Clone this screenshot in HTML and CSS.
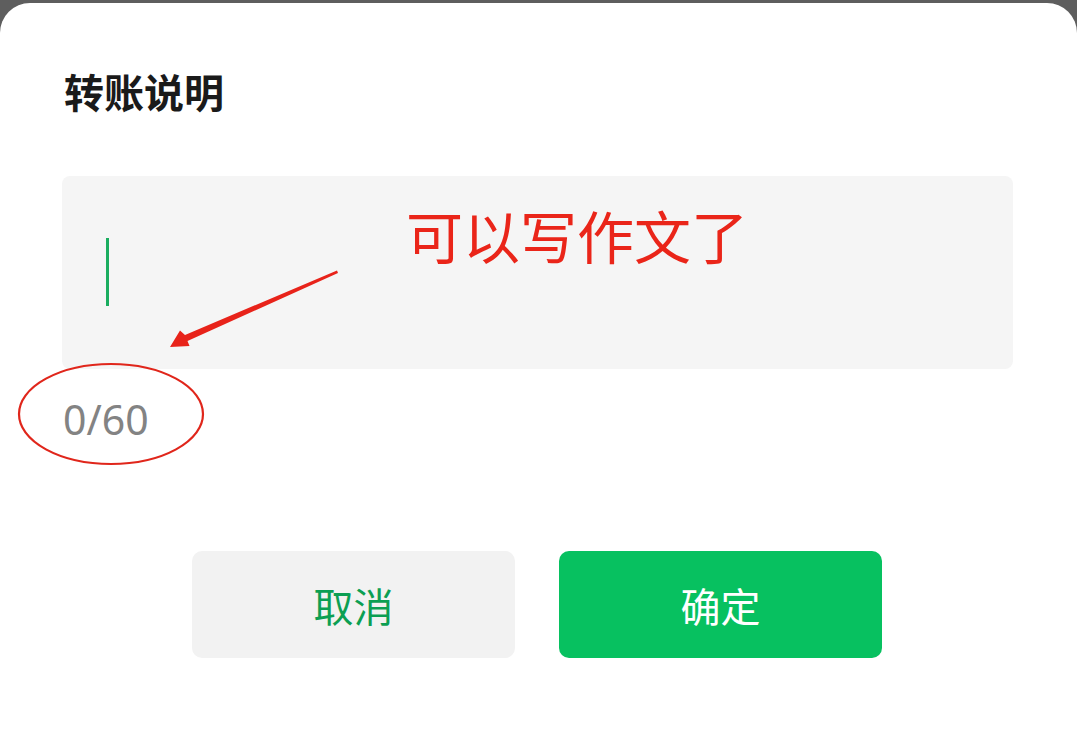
FILE: index.html
```html
<!DOCTYPE html>
<html lang="zh-CN">
<head>
  <meta charset="UTF-8">
  <meta name="viewport" content="width=device-width, initial-scale=1.0">
  <title>转账说明</title>
  <link rel="stylesheet" href="styles.css">
</head>
<body>
  <div class="sheet">
    <h1 class="title">转账说明</h1>

    <div class="note-box">
      <span class="caret"></span>
      <span class="remark">可以写作文了</span>
    </div>
    <div class="counter">0/60</div>

    <div class="actions">
      <button class="btn cancel">取消</button>
      <button class="btn confirm">确定</button>
    </div>

    <!-- annotation marks drawn over the dialog -->
    <svg class="marks" width="1077" height="738" viewBox="0 3 1077 738">
      <ellipse cx="111" cy="414" rx="92" ry="50" fill="none" stroke="#e0261b" stroke-width="2.2"/>
      <path d="M337 270.5 L185 335 L180 330.5 L170 347 L189.5 346 L187.5 341 L338 273 Z" fill="#e8231a"/>
    </svg>
  </div>
</body>
</html>
```

FILE: styles.css
```css
body {
  margin: 0;
  padding: 0;
  background-color: #5e5e5e;
  font-family: "Noto Sans CJK SC", "Noto Sans", sans-serif;
}

.sheet {
  position: relative;
  margin-top: 3px;
  height: 738px;
  background: #fff;
  border-radius: 30px 30px 0 0;
  padding: 0 64px 0 62px;
  box-sizing: border-box;
  overflow: hidden;
}

.title {
  margin: 0;
  padding: 58px 0 0 2px;
  font-size: 40px;
  line-height: 60px;
  font-weight: 700;
  color: #1a1a1a;
}

.note-box {
  position: relative;
  margin-top: 55px;
  height: 193px;
  background: #f5f5f5;
  border-radius: 8px;
}

.caret {
  position: absolute;
  left: 44px;
  top: 62px;
  width: 3px;
  height: 68px;
  background: #1aad5f;
}

.remark {
  position: absolute;
  left: 344px;
  top: 20px;
  font-size: 57px;
  line-height: 76px;
  color: #ea2519;
  white-space: nowrap;
}

.counter {
  margin-top: 27px;
  padding-left: 1px;
  font-family: "Noto Sans", sans-serif;
  font-size: 41px;
  line-height: 46px;
  color: #838383;
}

.actions {
  display: flex;
  gap: 44px;
  margin-top: 109px;
  padding-left: 130px;
}

.btn {
  width: 323px;
  height: 107px;
  border: none;
  border-radius: 10px;
  font-family: "Noto Sans CJK SC", sans-serif;
  font-size: 40px;
  cursor: pointer;
}

.btn.cancel {
  background: #f2f2f2;
  color: #0c9f53;
}

.btn.confirm {
  background: #07c160;
  color: #fff;
}

.marks {
  position: absolute;
  top: 0;
  left: 0;
  pointer-events: none;
}
```
